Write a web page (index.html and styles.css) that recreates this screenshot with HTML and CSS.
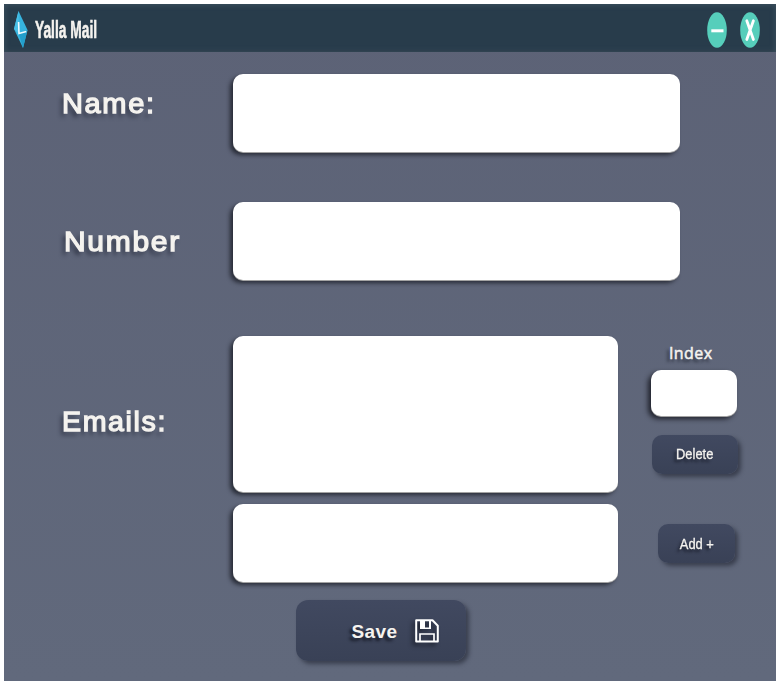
FILE: index.html
```html
<!DOCTYPE html>
<html lang="en">
<head>
<meta charset="utf-8">
<title>Yalla Mail</title>
<link rel="stylesheet" href="styles.css">
</head>
<body>
<main class="window">
  <header class="titlebar">
    <svg class="logo" width="14" height="38" viewBox="0 0 14 38" aria-hidden="true">
      <path d="M4.5 0 L13.5 19 L9 37 L0 18Z" fill="#36b4df"/>
      <path d="M4.5 0 L4.8 22.5 L0 18Z" fill="#49bfe6"/>
      <path d="M4.7 22.5 L9 37 L13.5 19Z" fill="#239fcc"/>
      <path d="M4.6 11 L5 22.5 L12.3 20.5" fill="none" stroke="#eefaff" stroke-width="1.6"/>
    </svg>
    <h1 class="title"><span>Yalla Mail</span></h1>
    <div class="controls">
      <svg width="20" height="36" viewBox="0 0 20 36" role="img">
        <ellipse cx="10" cy="18" rx="9.8" ry="17.8" fill="#56cebb"/>
        <path d="M4.3 18.8H16.5" stroke="#fff" stroke-width="3"/>
      </svg>
      <svg width="20" height="36" viewBox="0 0 20 36" role="img">
        <ellipse cx="10" cy="18" rx="9.8" ry="17.8" fill="#56cebb"/>
        <path d="M6.8 8.7L13.4 27.5M13.4 8.7L6.8 27.5" stroke="#fff" stroke-width="2.8" stroke-linecap="round"/>
      </svg>
    </div>
  </header>
  <form class="form">
    <div class="row row-name">
      <span class="label name"><span>Name:</span></span>
      <div class="field"></div>
    </div>
    <div class="row row-number">
      <span class="label number"><span>Number</span></span>
      <div class="field"></div>
    </div>
    <div class="row row-emails">
      <span class="label emails"><span>Emails:</span></span>
      <div class="stack">
        <div class="field list"></div>
        <div class="field"></div>
      </div>
      <div class="side">
        <span class="index-label">Index</span>
        <div class="field index"></div>
        <div class="button delete"><span>Delete</span></div>
        <div class="button add"><span>Add +</span></div>
      </div>
    </div>
    <div class="button save">
      <span>Save</span>
      <svg width="24" height="24" viewBox="0 0 24 24" aria-hidden="true">
        <path d="M1.2 1.2H17.5L22.8 6.7V22.6H1.2Z" fill="none" stroke="#fff" stroke-width="2" stroke-linejoin="round"/>
        <path d="M5 1H16V10H5ZM10 2V8.5H14V2Z" fill="#fff" fill-rule="evenodd"/>
        <path d="M5 22V15H19V22" fill="none" stroke="#fff" stroke-width="1.7"/>
      </svg>
    </div>
  </form>
</main>
</body>
</html>
```
FILE: styles.css
```css
* { box-sizing: border-box; }
body {
  margin: 0;
  padding: 4px;
  background: #fff;
  font-family: "Liberation Sans", Arial, sans-serif;
  color: #f5f3ef;
}
.window {
  width: 772px;
  height: 677px;
  overflow: hidden;
  background: linear-gradient(#5c6276, #61697c);
}
.titlebar {
  display: flex;
  height: 48px;
  padding: 8px 16px 0 10px;
  background: #283c4b;
  box-shadow: inset 0 0 5px 1px #3d515f, inset 0 -2px 2px #20303d;
}
.logo { margin-top: -1px; }
.title {
  width: 64px;
  margin: 4px 0 0 7px;
  font-size: 23px;
  line-height: 28px;
  white-space: nowrap;
}
.title span {
  display: inline-block;
  transform: scaleX(.6);
  transform-origin: left;
  -webkit-text-stroke: .6px #f5f3ef;
}
.controls {
  display: flex;
  gap: 13px;
  margin-left: auto;
}
.form { padding: 22px 0 0 58px; }
.row {
  display: grid;
  grid-template-columns: 171px auto 1fr;
}
.row-name { height: 128px; }
.row-number { height: 134px; }
.row-emails { height: 264px; }
.label {
  font-size: 28px;
  line-height: 34px;
  letter-spacing: 1.6px;
  -webkit-text-stroke: 1.3px #f5f3ef;
  text-shadow: -3px 4px 4px rgba(25, 29, 44, .65);
}
.label span {
  display: inline-block;
  white-space: nowrap;
  transform-origin: left;
  transform: scaleX(1.035);
}
.name { padding-top: 13px; }
.number { padding: 23px 0 0 2px; }
.number span { transform: scaleX(1.07); }
.emails { padding-top: 69px; }
.emails span { transform: scaleX(1.02); }
.field {
  width: 447px;
  height: 78px;
  border-radius: 10px;
  background: #fff;
  box-shadow: 0 1px 0 #a3a3a3, -3px 3px 4px rgba(22, 24, 32, .75);
}
.stack {
  display: grid;
  grid-template-rows: 157px 79px;
  row-gap: 11px;
  align-content: start;
}
.stack .field { width: 385px; }
.stack .list { height: 156px; }
.side { padding-left: 33px; }
.index-label {
  display: block;
  height: 34px;
  padding: 8px 0 0 18px;
  font: 400 16px/18px "Open Sans", sans-serif;
  letter-spacing: .4px;
  -webkit-text-stroke: .5px #f5f3ef;
  text-shadow: -3px 3px 3px rgba(20, 24, 34, .7);
}
.side .index {
  width: 86px;
  height: 46px;
  box-shadow: 0 1px 0 #a3a3a3, -3px 3px 5px rgba(22, 24, 32, .85);
}
.button {
  display: flex;
  align-items: center;
  justify-content: center;
  border-radius: 10px;
  background: linear-gradient(#414960, #394156);
  box-shadow: 3px 3px 4px rgba(25, 29, 42, .55);
  font: 400 15px/20px "Liberation Sans", sans-serif;
  text-shadow: -3px 3px 3px rgba(15, 18, 28, .75);
}
.button.delete, .button.add { height: 39px; }
.delete {
  width: 86px;
  margin: 19px 0 0 1px;
}
.button.delete span,
.button.add span {
  display: inline-block;
  margin-top: -2px;
  transform: scaleX(.86);
  -webkit-text-stroke: .3px #f5f3ef;
}
.add {
  width: 77px;
  margin: 50px 0 0 7px;
}
.button.add span { margin-top: 0; }
.save {
  width: 170px;
  height: 61px;
  margin-left: 234px;
  padding-left: 29px;
  gap: 18px;
  border-radius: 12px;
  font: bold 19px/24px "Liberation Sans", sans-serif;
  letter-spacing: .4px;
}
.save span { margin-top: 2px; }
.save svg { filter: drop-shadow(-3px 3px 2px rgba(15, 18, 28, .7)); }
```
